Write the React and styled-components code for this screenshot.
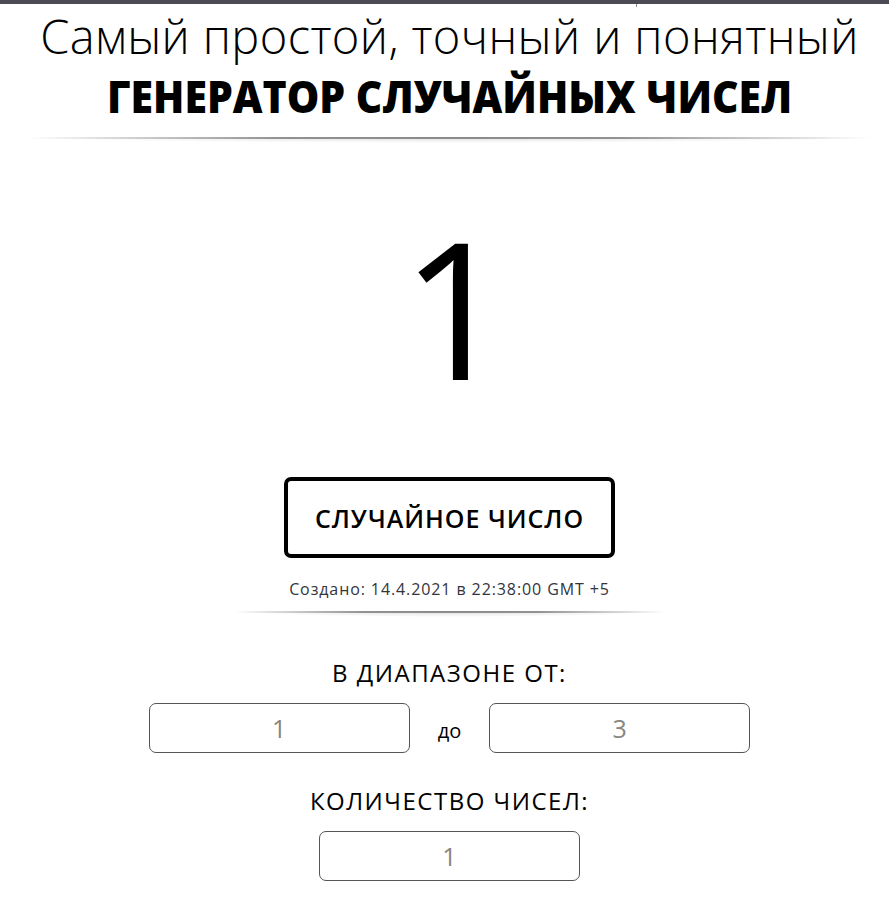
import React, {useState} from "react"
import styled, {createGlobalStyle} from "styled-components"

const Global = createGlobalStyle`
body {
  margin: 0;
  background: #fff;
  font-family: "Open Sans", sans-serif;
  color: #000;
}
`

export default function App() {
    const [from, setFrom] = useState("1")
    const [to, setTo] = useState("3")
    const [count, setCount] = useState("1")

    return (
        <>
        <Global />
        <TopBar><Tick /></TopBar>
        <Page>
        <Header>
            <Subtitle>Самый простой, точный и понятный</Subtitle>
            <Title>ГЕНЕРАТОР СЛУЧАЙНЫХ ЧИСЕЛ</Title>
        </Header>
        <Divider $width="845px" $top="11px" />
        <Main>
            <Number>1</Number>
            <GenerateButton>СЛУЧАЙНОЕ ЧИСЛО</GenerateButton>
            <Created>Создано: 14.4.2021 в 22:38:00 GMT +5</Created>
            <Divider $width="432px" $top="11px" />
            <Label $top="39px">В ДИАПАЗОНЕ ОТ:</Label>
            <RangeRow>
                <Field value={from} onChange={(e) => setFrom(e.target.value)} />
                <Between>до</Between>
                <Field value={to} onChange={(e) => setTo(e.target.value)} />
            </RangeRow>
            <Label $top="31px">КОЛИЧЕСТВО ЧИСЕЛ:</Label>
            <RangeRow>
                <Field value={count} onChange={(e) => setCount(e.target.value)} />
            </RangeRow>
        </Main>
        </Page>
        </>
    )
}

const TopBar = styled.div`
height: 4px;
background: #4b4a55;
position: relative;
`

const Tick = styled.span`
position: absolute;
left: 636px;
top: 4px;
width: 1px;
height: 3px;
background: #888;
`

const Page = styled.div`
padding-left: 10px;
`

const Header = styled.header`
display: flex;
flex-direction: column;
align-items: center;
padding-top: 2px;
`

const Subtitle = styled.h2`
margin: 0;
font-family: "Open Sans", sans-serif;
font-weight: 300;
font-size: 47px;
line-height: 60px;
letter-spacing: 0.4px;
`

const Title = styled.h1`
margin: 0;
font-family: "Open Sans", sans-serif;
font-weight: 800;
font-size: 45px;
line-height: 60px;
transform: scaleX(0.91);
`

const Divider = styled.div`
width: ${(p) => p.$width};
height: 6px;
margin: ${(p) => p.$top} auto 0;
background:
  radial-gradient(ellipse 50% 100% at 50% 0%, rgba(0,0,0,0.14), rgba(0,0,0,0) 100%);
position: relative;

&::before {
  content: "";
  position: absolute;
  left: 0;
  right: 0;
  top: 0;
  height: 2px;
  background: linear-gradient(to right, rgba(0,0,0,0) 0%, rgba(0,0,0,0.38) 30%, rgba(0,0,0,0.38) 70%, rgba(0,0,0,0) 100%);
}
`

const Main = styled.main`
display: flex;
flex-direction: column;
align-items: center;
`

const Number = styled.div`
font-family: "Open Sans", sans-serif;
font-size: 190px;
line-height: 200px;
margin-top: 64px;
padding-left: 12px;
`

const GenerateButton = styled.button`
margin-top: 70px;
width: 331px;
height: 81px;
background: #fff;
border: 4px solid #000;
border-radius: 7px;
font-family: "Open Sans", sans-serif;
font-weight: 600;
font-size: 25px;
letter-spacing: 1px;
color: #000;
cursor: pointer;
`

const Created = styled.p`
margin: 20px 0 0;
font-size: 16px;
letter-spacing: 0.9px;
color: #33343c;
`

const Label = styled.div`
margin-top: ${(p) => p.$top};
font-size: 24px;
letter-spacing: 1.5px;
`

const RangeRow = styled.div`
display: flex;
align-items: center;
gap: 28px;
margin-top: 14px;
`

const Field = styled.input`
box-sizing: border-box;
width: 261px;
height: 50px;
border: 1px solid #555;
border-radius: 7px;
text-align: center;
font-family: "Open Sans", sans-serif;
font-size: 25px;
color: #888580;
outline: none;
`

const Between = styled.span`
font-size: 20px;
margin-top: 4px;
`
